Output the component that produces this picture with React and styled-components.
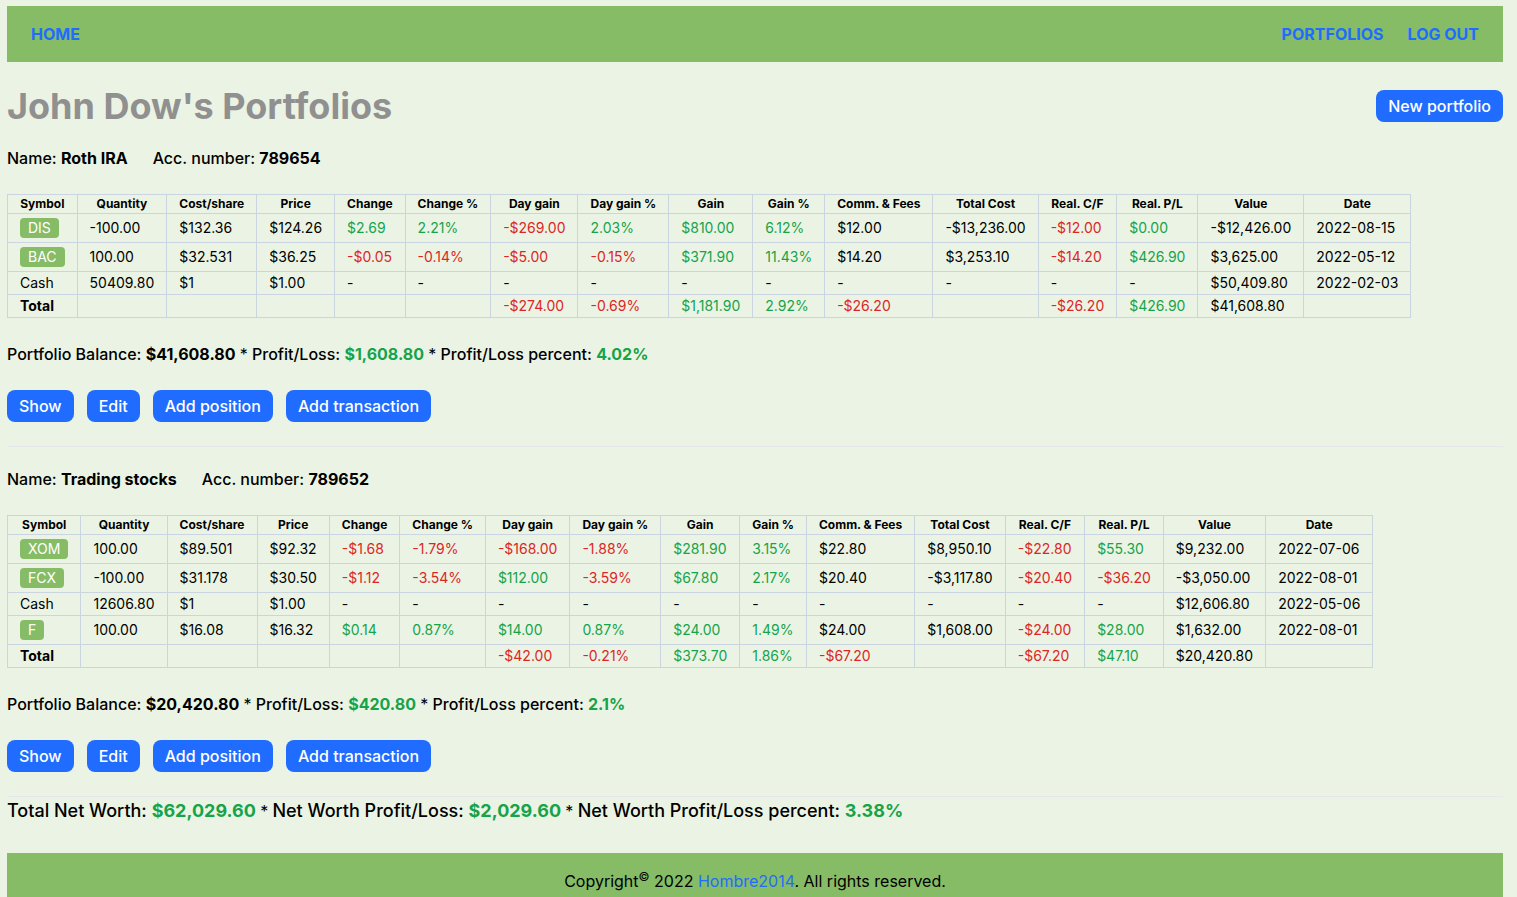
import React from "react";
import styled, { createGlobalStyle } from "styled-components";

const GREEN = "#86bc66";
const BLUE = "#206cff";

const GlobalStyle = createGlobalStyle`
  *, *::before, *::after { box-sizing: border-box; }
  html { background: #ebf4e4; }
  body {
    margin: 6px 14px 0 7px;
    font-family: Inter, "Liberation Sans", sans-serif;
    font-size: 16px;
    line-height: 24px;
    color: #000;
  }
  h1, h2, p { margin: 0; }
`;

const Header = styled.header`
  display: flex;
  justify-content: space-between;
  align-items: center;
  height: 56px;
  padding: 0 24px;
  background: ${GREEN};
`;

const NavGroup = styled.nav`
  display: flex;
  gap: 24px;
`;

const NavLink = styled.a`
  color: ${BLUE};
  font-weight: 700;
  text-decoration: none;
  text-transform: uppercase;
`;

const TitleRow = styled.div`
  display: flex;
  justify-content: space-between;
  align-items: center;
  margin: 24px 0 20px;
`;

const Title = styled.h1`
  font-size: 36px;
  line-height: 40px;
  font-weight: 700;
  color: #909090;
`;

const Button = styled.button`
  height: 32px;
  padding: 0 12px;
  border: 0;
  border-radius: 8px;
  background: ${BLUE};
  color: #fff;
  font: inherit;
  font-weight: 500;
  cursor: pointer;
`;

const Section = styled.section`
  margin-bottom: 20px;
  padding-bottom: 24px;
  border-bottom: 1px solid #e5e7eb;

  &:last-of-type { margin-bottom: 0; }
`;

const Details = styled.div`
  display: flex;
  gap: 25px;
  font-weight: 500;
  line-height: 24px;
`;

const Table = styled.table`
  margin: 24px 0;
  border-collapse: collapse;
  font-size: 14px;
  line-height: 20px;
`;

const HeadCell = styled.th`
  padding: 1px 12px;
  border: 1px solid #cbd5e1;
  font-size: 12px;
  line-height: 16px;
  font-weight: 700;
  white-space: nowrap;
`;

const toneColor = { up: "#16a34a", down: "#dc2626", plain: "#000" };

const Cell = styled.td`
  padding: 1px 12px;
  border: 1px solid #cbd5e1;
  color: ${(p) => toneColor[p.$tone || "plain"]};
  font-weight: ${(p) => (p.$bold ? 700 : 400)};
  white-space: nowrap;
`;

const Ticker = styled.a`
  display: block;
  width: fit-content;
  margin: 3px 0;
  padding: 0 8px;
  border-radius: 4px;
  background: ${GREEN};
  color: #fff;
  text-decoration: none;
`;

const Summary = styled.p`
  margin-bottom: 24px;
  font-weight: 500;
`;

const Gain = styled.strong`
  color: #16a34a;
`;

const Separator = styled.span`
  font-weight: 400;
`;

const Actions = styled.div`
  display: flex;
  gap: 13px;
`;

const NetWorth = styled.p`
  line-height: 28px;
  font-weight: 500;
`;

const NetWorthItem = styled.span`
  font-size: 18px;
`;

const Footer = styled.footer`
  margin-top: 28px;
  height: 56px;
  padding-top: 16px;
  background: ${GREEN};
  text-align: center;

  sup { font-size: 12px; line-height: 0; }
  a { color: ${BLUE}; text-decoration: none; }
`;

const columns = ["Symbol", "Quantity", "Cost/share", "Price", "Change", "Change %", "Day gain", "Day gain %", "Gain", "Gain %", "Comm. & Fees", "Total Cost", "Real. C/F", "Real. P/L", "Value", "Date"];

const portfolios = [
  {
    name: "Roth IRA",
    account: "789654",
    balance: "$41,608.80",
    profit: "$1,608.80",
    percent: "4.02%",
    rows: [
      ["DIS", "-100.00", "$132.36", "$124.26", "+$2.69", "+2.21%", "!-$269.00", "+2.03%", "+$810.00", "+6.12%", "$12.00", "-$13,236.00", "!-$12.00", "+$0.00", "-$12,426.00", "2022-08-15"],
      ["BAC", "100.00", "$32.531", "$36.25", "!-$0.05", "!-0.14%", "!-$5.00", "!-0.15%", "+$371.90", "+11.43%", "$14.20", "$3,253.10", "!-$14.20", "+$426.90", "$3,625.00", "2022-05-12"],
      ["Cash", "50409.80", "$1", "$1.00", "-", "-", "-", "-", "-", "-", "-", "-", "-", "-", "$50,409.80", "2022-02-03"],
      ["Total", "", "", "", "", "", "!-$274.00", "!-0.69%", "+$1,181.90", "+2.92%", "!-$26.20", "", "!-$26.20", "+$426.90", "$41,608.80", ""],
    ],
  },
  {
    name: "Trading stocks",
    account: "789652",
    balance: "$20,420.80",
    profit: "$420.80",
    percent: "2.1%",
    rows: [
      ["XOM", "100.00", "$89.501", "$92.32", "!-$1.68", "!-1.79%", "!-$168.00", "!-1.88%", "+$281.90", "+3.15%", "$22.80", "$8,950.10", "!-$22.80", "+$55.30", "$9,232.00", "2022-07-06"],
      ["FCX", "-100.00", "$31.178", "$30.50", "!-$1.12", "!-3.54%", "+$112.00", "!-3.59%", "+$67.80", "+2.17%", "$20.40", "-$3,117.80", "!-$20.40", "!-$36.20", "-$3,050.00", "2022-08-01"],
      ["Cash", "12606.80", "$1", "$1.00", "-", "-", "-", "-", "-", "-", "-", "-", "-", "-", "$12,606.80", "2022-05-06"],
      ["F", "100.00", "$16.08", "$16.32", "+$0.14", "+0.87%", "+$14.00", "+0.87%", "+$24.00", "+1.49%", "$24.00", "$1,608.00", "!-$24.00", "+$28.00", "$1,632.00", "2022-08-01"],
      ["Total", "", "", "", "", "", "!-$42.00", "!-0.21%", "+$373.70", "+1.86%", "!-$67.20", "", "!-$67.20", "+$47.10", "$20,420.80", ""],
    ],
  },
];

// A leading "+" marks a gain and "!" marks a loss; neither is printed.
function ValueCell({ value }) {
  const tone = { "+": "up", "!": "down" }[value[0]];
  return <Cell $tone={tone}>{tone ? value.slice(1) : value}</Cell>;
}

function SymbolCell({ symbol }) {
  const isTicker = symbol !== "Cash" && symbol !== "Total";
  return (
    <Cell $bold={symbol === "Total"}>
      {isTicker ? <Ticker href={`#${symbol}`}>{symbol}</Ticker> : symbol}
    </Cell>
  );
}

function Portfolio({ name, account, balance, profit, percent, rows }) {
  return (
    <Section>
      <Details>
        <span>Name: <strong>{name}</strong></span>
        <span>Acc. number: <strong>{account}</strong></span>
      </Details>
      <Table>
        <thead>
          <tr>{columns.map((c) => <HeadCell key={c} scope="col">{c}</HeadCell>)}</tr>
        </thead>
        <tbody>
          {rows.map(([symbol, ...values]) => (
            <tr key={symbol}>
              <SymbolCell symbol={symbol} />
              {values.map((v, i) => <ValueCell key={columns[i + 1]} value={v} />)}
            </tr>
          ))}
        </tbody>
      </Table>
      <Summary>
        Portfolio Balance: <strong>{balance}</strong> <Separator>*</Separator> Profit/Loss: <Gain>{profit}</Gain> <Separator>*</Separator> Profit/Loss percent: <Gain>{percent}</Gain>
      </Summary>
      <Actions>
        <Button type="button">Show</Button>
        <Button type="button">Edit</Button>
        <Button type="button">Add position</Button>
        <Button type="button">Add transaction</Button>
      </Actions>
    </Section>
  );
}

export default function App() {
  return (
    <>
      <GlobalStyle />
      <Header>
        <NavGroup><NavLink href="#home">Home</NavLink></NavGroup>
        <NavGroup>
          <NavLink href="#portfolios">Portfolios</NavLink>
          <NavLink href="#logout">Log out</NavLink>
        </NavGroup>
      </Header>
      <main>
        <TitleRow>
          <Title>John Dow's Portfolios</Title>
          <Button type="button">New portfolio</Button>
        </TitleRow>
        {portfolios.map((p) => <Portfolio key={p.account} {...p} />)}
        <NetWorth>
          <NetWorthItem>Total Net Worth: <Gain>$62,029.60</Gain></NetWorthItem> <Separator>*</Separator>{" "}
          <NetWorthItem>Net Worth Profit/Loss: <Gain>$2,029.60</Gain></NetWorthItem> <Separator>*</Separator>{" "}
          <NetWorthItem>Net Worth Profit/Loss percent: <Gain>3.38%</Gain></NetWorthItem>
        </NetWorth>
      </main>
      <Footer>
        Copyright<sup>©</sup> 2022 <a href="#hombre2014">Hombre2014</a>. All rights reserved.
      </Footer>
    </>
  );
}
